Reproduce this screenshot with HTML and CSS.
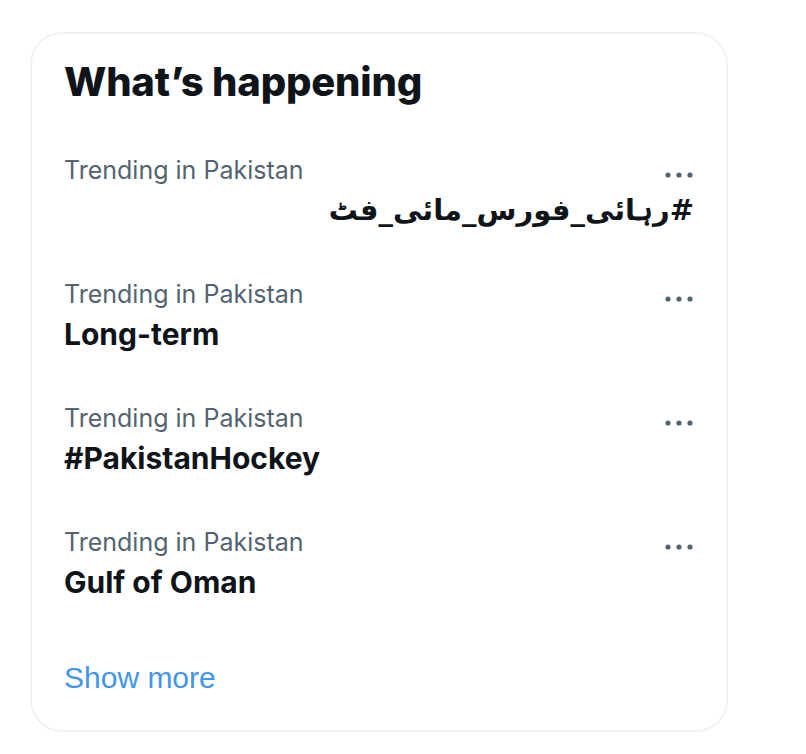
FILE: index.html
```html
<!DOCTYPE html>
<html lang="en">
<head>
<meta charset="utf-8">
<link rel="stylesheet" href="styles.css">
</head>
<body>
<aside class="card">
  <h2 class="title">What’s happening</h2>
  <div class="trend">
    <div class="meta">Trending in Pakistan</div>
    <div class="name rtl" dir="rtl">#رہائی_فورس_مائی_فٹ</div>
    <span class="more"><svg viewBox="0 0 38 38" width="38" height="38"><circle cx="8" cy="19" r="2.6"/><circle cx="19" cy="19" r="2.6"/><circle cx="30" cy="19" r="2.6"/></svg></span>
  </div>
  <div class="trend">
    <div class="meta">Trending in Pakistan</div>
    <div class="name">Long-term</div>
    <span class="more"><svg viewBox="0 0 38 38" width="38" height="38"><circle cx="8" cy="19" r="2.6"/><circle cx="19" cy="19" r="2.6"/><circle cx="30" cy="19" r="2.6"/></svg></span>
  </div>
  <div class="trend">
    <div class="meta">Trending in Pakistan</div>
    <div class="name">#PakistanHockey</div>
    <span class="more"><svg viewBox="0 0 38 38" width="38" height="38"><circle cx="8" cy="19" r="2.6"/><circle cx="19" cy="19" r="2.6"/><circle cx="30" cy="19" r="2.6"/></svg></span>
  </div>
  <div class="trend">
    <div class="meta">Trending in Pakistan</div>
    <div class="name">Gulf of Oman</div>
    <span class="more"><svg viewBox="0 0 38 38" width="38" height="38"><circle cx="8" cy="19" r="2.6"/><circle cx="19" cy="19" r="2.6"/><circle cx="30" cy="19" r="2.6"/></svg></span>
  </div>
  <a class="show-more" href="#">Show more</a>
</aside>
</body>
</html>
```
FILE: styles.css
```css
html, body {
  margin: 0;
  background: #ffffff;
}
body {
  padding: 32px 0 0 30px;
  font-family: Inter, "Noto Sans", "DejaVu Sans", sans-serif;
  color: #0f1419;
}
.card {
  width: 698px;
  box-sizing: border-box;
  border: 2px solid #eff3f4;
  border-radius: 32px;
  display: flex;
  flex-direction: column;
}
.title {
  margin: 0;
  padding: 24px 32px;
  font-size: 40px;
  line-height: 48px;
  font-weight: 800;
  letter-spacing: -0.2px;
}
.trend {
  position: relative;
  padding: 24px 32px;
  display: flex;
  flex-direction: column;
}
.meta {
  font-size: 25px;
  line-height: 32px;
  color: #536471;
}
.name {
  padding-top: 4px;
  font-size: 30px;
  line-height: 40px;
  font-weight: 700;
}
.rtl {
  font-family: "DejaVu Sans", sans-serif;
  font-size: 29px;
  text-align: right;
}
.more {
  position: absolute;
  top: 26px;
  right: 28px;
  display: flex;
}
.more svg {
  fill: #536471;
}
.show-more {
  padding: 32px;
  font-family: "Liberation Sans", Arial, sans-serif;
  font-size: 30px;
  line-height: 40px;
  color: #4296ea;
  text-decoration: none;
}
```
